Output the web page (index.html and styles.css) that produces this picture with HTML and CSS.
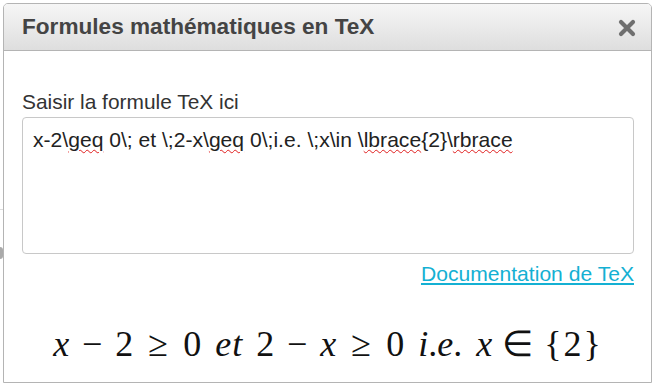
FILE: index.html
```html
<!DOCTYPE html>
<html lang="fr">
<head>
<meta charset="UTF-8" />
<title>Formules mathématiques en TeX</title>
<link rel="stylesheet" href="styles.css">
</head>
<body>
  <div class="backdrop">
    <span class="bg-line"></span>
    <span class="bg-blob"></span>
  </div>

  <div class="dialog">
    <div class="dialog-header">
      <h1>Formules mathématiques en TeX</h1>
      <svg class="close" width="18" height="18" viewBox="0 0 18 18" aria-label="Fermer">
        <path d="M3 3 L15 15 M15 3 L3 15" stroke="#6f6f6f" stroke-width="4.2" stroke-linecap="round" />
      </svg>
    </div>

    <div class="dialog-body">
      <label class="field-label">Saisir la formule TeX ici</label>
      <div class="tex-input">x-2\<span class="typo">geq</span> 0\; et \;2-x\<span class="typo">geq</span> 0\;i.e. \;x\in \<span class="typo">lbrace</span>{2}\<span class="typo">rbrace</span></div>

      <div class="doc-row">
        <a href="#" class="doc-link">Documentation de TeX</a>
      </div>

      <div class="preview">
        <span class="mi">x</span><span class="mo bin">&minus;</span><span class="mn">2</span><span class="mo rel">&ge;</span><span class="mn">0</span><span class="sp"></span><span class="mi">e</span><span class="mi">t</span><span class="sp"></span><span class="mn">2</span><span class="mo bin">&minus;</span><span class="mi">x</span><span class="mo rel">&ge;</span><span class="mn">0</span><span class="sp"></span><span class="mi">i</span><span class="mn">.</span><span class="mi">e</span><span class="mn">.</span><span class="sp"></span><span class="mi">x</span><span class="mo rel">&isin;</span><span class="mn brace">{</span><span class="mn">2</span><span class="mn brace">}</span>
      </div>
    </div>
  </div>
</body>
</html>
```

FILE: styles.css
```css
* {
  box-sizing: border-box;
}

body {
  margin: 0;
  width: 653px;
  height: 384px;
  overflow: hidden;
  background: #fff;
  font-family: "Liberation Sans", Arial, sans-serif;
  color: #333;
  position: relative;
}

/* page peeking out on the left */
.backdrop {
  position: absolute;
  left: 0;
  top: 0;
  width: 3px;
  height: 384px;
}

.bg-line {
  position: absolute;
  left: 0;
  top: 209px;
  width: 3px;
  height: 1px;
  background: #ddd;
}

.bg-blob {
  position: absolute;
  left: 0;
  top: 247px;
  width: 3px;
  height: 12px;
  background: #aaa;
  border-radius: 0 6px 6px 0;
}

.dialog {
  position: relative;
  margin: 3px 1px 0 3px;
  height: 380px;
  border: 1px solid #b4b4b4;
  border-radius: 5px 5px 0 0;
  background: #fff;
  display: flex;
  flex-direction: column;
}

.dialog-header {
  height: 47px;
  flex: none;
  display: flex;
  align-items: center;
  justify-content: space-between;
  padding: 0 15px 0 18px;
  background: linear-gradient(#f6f6f6, #dedede);
  border-bottom: 1px solid #b4b4b4;
  border-radius: 4px 4px 0 0;
}

.dialog-header h1 {
  margin: 0;
  font-size: 22.6px;
  font-weight: 700;
  color: #444;
}

.close {
  display: block;
  margin-top: 2px;
}

.dialog-body {
  padding: 39px 17px 0 18px;
  display: flex;
  flex-direction: column;
}

.field-label {
  font-size: 20.9px;
  line-height: 24px;
  color: #333;
  margin-bottom: 3px;
}

.tex-input {
  height: 137px;
  border: 1px solid #c8c8c8;
  border-radius: 4px;
  padding: 10px 10px;
  font-size: 21.1px;
  line-height: 24px;
  color: #222;
}

.typo {
  text-decoration: underline wavy #e02020;
  text-decoration-thickness: 1px;
  text-underline-offset: 2px;
}

.doc-row {
  display: flex;
  justify-content: flex-end;
  margin-top: 8px;
}

.doc-link {
  font-size: 21.1px;
  line-height: 24px;
  color: #14b0d3;
  text-decoration: underline;
  text-underline-offset: 2px;
}

.preview {
  margin-top: 35px;
  display: flex;
  justify-content: center;
  align-items: baseline;
  font-family: "Liberation Serif", "Times New Roman", serif;
  font-size: 36px;
  line-height: 46px;
  color: #111;
  white-space: nowrap;
}

.mi {
  font-style: italic;
}

.mi + .mi {
  margin-left: 1px;
}

.mo {
  display: inline-block;
  width: 30px;
  text-align: center;
}

.bin {
  margin: 0 8px;
}

.rel {
  margin: 0 10px;
}

.sp {
  display: inline-block;
  width: 14px;
}

.brace {
  padding: 0 2px;
}
```
